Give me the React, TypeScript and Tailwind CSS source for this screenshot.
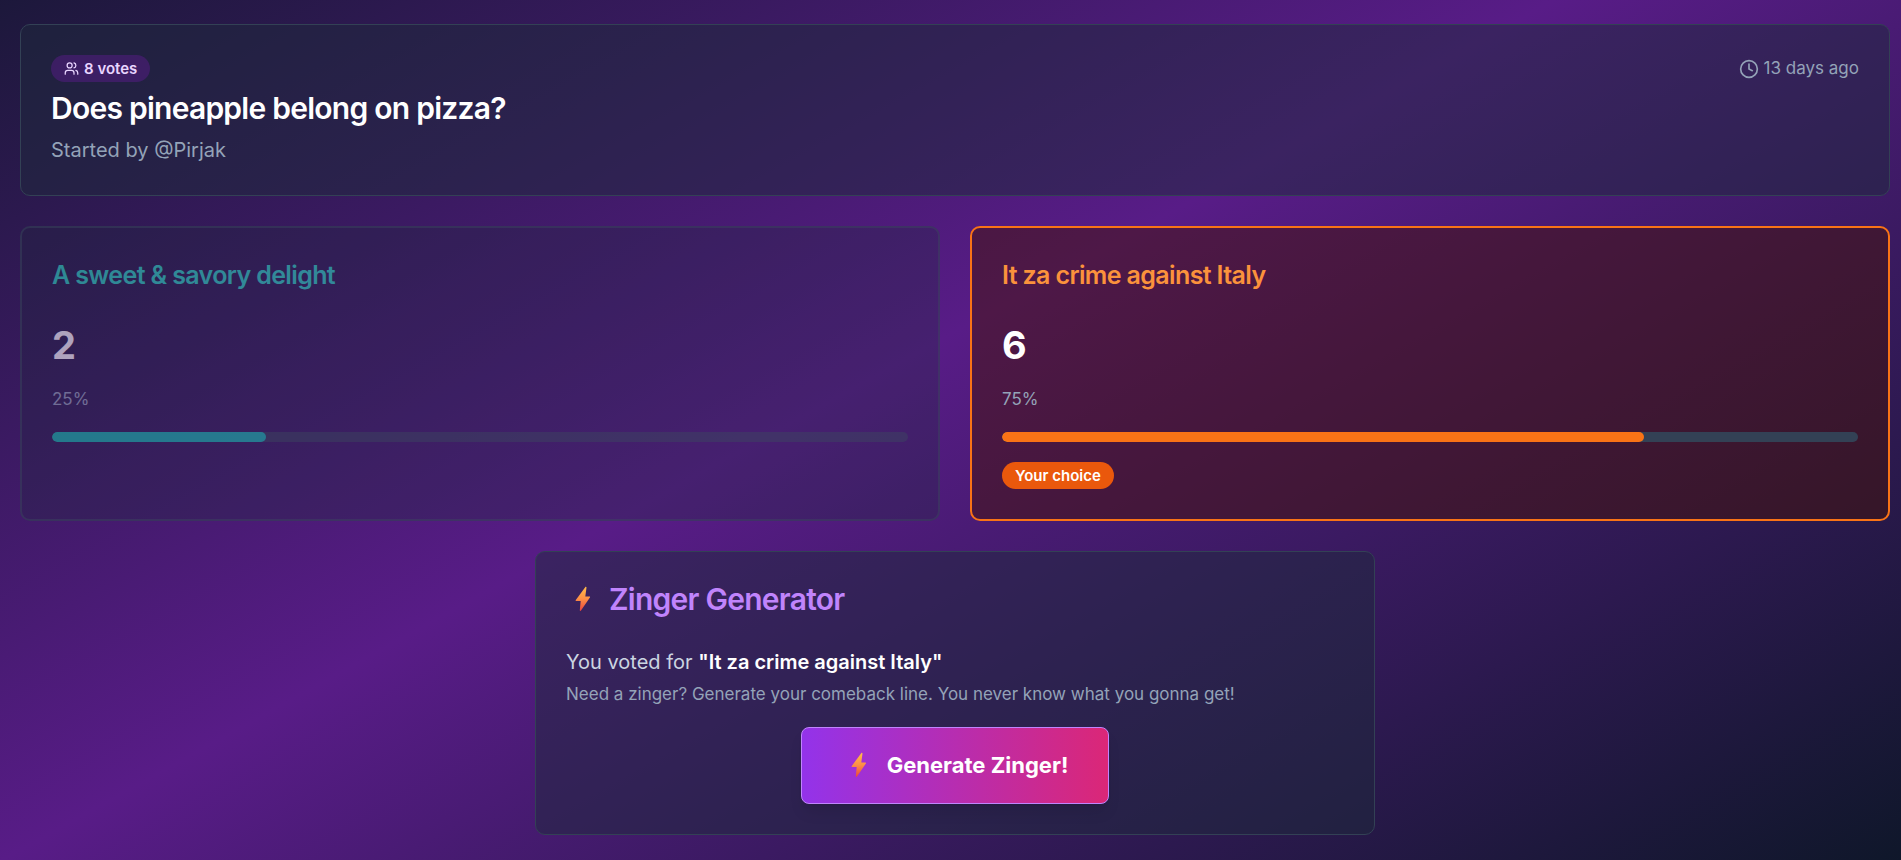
import { Clock, Users } from "lucide-react";
import { clsx } from "clsx";

type Side = {
  label: string;
  votes: number;
  percent: number;
  chosen: boolean;
  card: string;
  title: string;
  bar: string;
};

const sides: Side[] = [
  {
    label: "A sweet & savory delight",
    votes: 2,
    percent: 25,
    chosen: false,
    card: "border-[#334155] bg-[#1e293b]/50 opacity-60",
    title: "text-[#2dd4bf]",
    bar: "bg-[#14b8a6]",
  },
  {
    label: "It za crime against Italy",
    votes: 6,
    percent: 75,
    chosen: true,
    card: "border-[#f97316] bg-[#431407]/50",
    title: "text-[#fb923c]",
    bar: "bg-[#f97316]",
  },
];

function Bolt({ id }: { id: string }) {
  return (
    <svg viewBox="0 0 35 35" className="size-[35px] shrink-0" aria-hidden>
      <defs>
        <linearGradient id={id} x1="0" y1="0" x2="0" y2="1">
          <stop offset="0" stopColor="#ffbd4a" />
          <stop offset="0.5" stopColor="#fd8f45" />
          <stop offset="1" stopColor="#e8443f" />
        </linearGradient>
      </defs>
      <path
        d="M19.2 5.2 9.8 17.9c-.4.6-.1 1.1.5 1.1h4.4l-.9 9.2c0 .8.7 1 1.2.3l8.9-12.9c.4-.6.1-1.1-.5-1.1h-4.1l1.2-8.9c0-.8-.8-1.1-1.3-.4Z"
        fill={`url(#${id})`}
      />
    </svg>
  );
}

function SideCard({ side }: { side: Side }) {
  return (
    <div
      className={clsx(
        "flex flex-col gap-5 rounded-[10px] border-2 p-[30px]",
        side.card,
      )}
    >
      <h2
        className={clsx(
          "mb-[10px] text-[25px] leading-[35px] font-semibold tracking-tight",
          side.title,
        )}
      >
        {side.label}
      </h2>
      <p className="text-[38px] leading-[44px] font-bold">{side.votes}</p>
      <p className="text-[17px] leading-[25px] text-[#94a3b8]">
        {side.percent}%
      </p>
      <div className="h-[10px] overflow-hidden rounded-full bg-[#334155]">
        <div
          className={clsx("h-full rounded-full", side.bar)}
          style={{ width: `${side.percent}%` }}
        />
      </div>
      {side.chosen && (
        <span className="self-start rounded-full bg-[#ea580c] px-[13px] text-[15px] leading-[27px] font-semibold">
          Your choice
        </span>
      )}
    </div>
  );
}

export default function App() {
  const choice = sides.find((side) => side.chosen);

  return (
    <main className="flex min-h-screen flex-col gap-[30px] bg-[linear-gradient(151deg,#0f172a_-10%,#581c87_45%,#0f172a_100%)] pt-6 pr-[11px] pb-6 pl-5 font-['Inter',sans-serif] text-white">
      <section className="rounded-[10px] border border-[#334155] bg-[#1e293b]/50 p-[30px]">
        <div className="flex items-center justify-between">
          <span className="flex items-center gap-[5px] rounded-full bg-[#581c87]/50 px-[13px] text-[15px] leading-[27px] font-semibold text-[#e9d5ff]">
            <Users size={15} />8 votes
          </span>
          <span className="flex items-center gap-[5px] text-[17px] leading-[27px] text-[#94a3b8]">
            <Clock size={20} />
            13 days ago
          </span>
        </div>
        <h1 className="mt-[6px] text-[30px] leading-[40px] font-semibold tracking-tight">
          Does pineapple belong on pizza?
        </h1>
        <p className="mt-[7px] text-[20px] leading-[30px] text-[#94a3b8]">
          Started by @Pirjak
        </p>
      </section>

      <section className="grid grid-cols-2 gap-[30px]">
        {sides.map((side) => (
          <SideCard key={side.label} side={side} />
        ))}
      </section>

      <section className="w-full max-w-[840px] self-center rounded-[10px] border border-[#334155] bg-[#1e293b]/50 p-[30px]">
        <h2 className="flex items-center gap-2 text-[30px] leading-[35px] font-semibold tracking-tight text-[#c084fc]">
          <Bolt id="bolt-title" />
          Zinger Generator
        </h2>
        <p className="mt-[30px] text-[20px] leading-[30px] text-[#cbd5e1]">
          You voted for{" "}
          <strong className="font-semibold text-white">
            "{choice?.label}"
          </strong>
        </p>
        <p className="mt-[5px] text-[17px] leading-[25px] text-[#94a3b8]">
          Need a zinger? Generate your comeback line. You never know what you
          gonna get!
        </p>
        <button
          type="button"
          className="mx-auto mt-5 flex items-center gap-[10px] rounded-lg border border-[#c084fc] bg-[linear-gradient(to_right,#9333ea,#db2777)] px-10 py-5 text-[22px] leading-[35px] font-bold shadow-lg"
        >
          <Bolt id="bolt-button" />
          Generate Zinger!
        </button>
      </section>
    </main>
  );
}
